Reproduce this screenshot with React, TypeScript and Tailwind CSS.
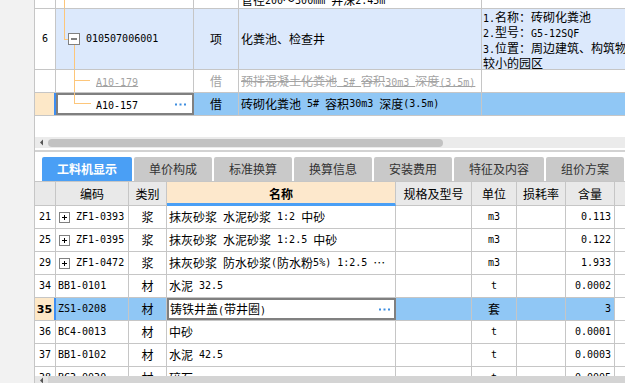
import React from 'react';

const ASCII = /^[\x20-\x7e]+$/;
function T({ s }: { s: string }) {
  const parts = s.split(/([\x20-\x7e]+)/).filter((p) => p.length > 0);
  return (
    <>
      {parts.map((p, i) =>
        ASCII.test(p) ? (
          <span key={i} className="font-['DejaVu_Sans_Mono',monospace] text-[10px] whitespace-pre">
            {p}
          </span>
        ) : (
          <span key={i}>{p}</span>
        )
      )}
    </>
  );
}

function Dots() {
  return (
    <svg width="11" height="3" viewBox="0 0 11 3" className="shrink-0">
      <rect x="0" y="0.5" width="2" height="2" fill="#3d8de0" />
      <rect x="4.5" y="0.5" width="2" height="2" fill="#3d8de0" />
      <rect x="9" y="0.5" width="2" height="2" fill="#3d8de0" />
    </svg>
  );
}

function PlusBox() {
  return (
    <svg width="11" height="11" viewBox="0 0 11 11" className="shrink-0">
      <rect x="0.5" y="0.5" width="10" height="10" fill="#fff" stroke="#808080" />
      <line x1="3" y1="5.5" x2="8" y2="5.5" stroke="#000" />
      <line x1="5.5" y1="3" x2="5.5" y2="8" stroke="#000" />
    </svg>
  );
}

const line = '#fdc67a';

const bottomRows = [
  { n: '21', box: true, code: 'ZF1-0393', t: '浆', name: '抹灰砂浆 水泥砂浆 1:2 中砂', unit: 'm3', q: '0.113' },
  { n: '25', box: true, code: 'ZF1-0395', t: '浆', name: '抹灰砂浆 水泥砂浆 1:2.5 中砂', unit: 'm3', q: '0.122' },
  { n: '29', box: true, code: 'ZF1-0472', t: '浆', name: '抹灰砂浆 防水砂浆(防水粉5%) 1:2.5 …', unit: 'm3', q: '1.933' },
  { n: '34', box: false, code: 'BB1-0101', t: '材', name: '水泥 32.5', unit: 't', q: '0.0002' },
  { n: '35', box: false, code: 'ZS1-0208', t: '材', name: '铸铁井盖(带井圈)', unit: '套', q: '3', sel: true },
  { n: '36', box: false, code: 'BC4-0013', t: '材', name: '中砂', unit: 't', q: '0.0001' },
  { n: '37', box: false, code: 'BB1-0102', t: '材', name: '水泥 42.5', unit: 't', q: '0.0003' },
  { n: '38', box: false, code: 'BC3-0030', t: '材', name: '碎石', unit: 't', q: '0.0005' },
];

const tabs = ['工料机显示', '单价构成', '标准换算', '换算信息', '安装费用', '特征及内容', '组价方案'];
const tabW = ['w-[90px]', 'w-[78px]', 'w-[78px]', 'w-[78px]', 'w-[78px]', 'w-[90px]', 'w-[78px]'];

export default function App() {
  return (
    <div className="flex w-[625px] h-[383px] overflow-hidden bg-white font-['Noto_Sans_CJK_SC',sans-serif] text-[12px] leading-none text-black">
      <div className="w-[34px] shrink-0 bg-[#f2f2f2]" />
      <div className="flex min-w-0 flex-1 flex-col border-l border-[#c6c6c6]">
        {/* Top grid */}
        <div className="flex h-[116px] shrink-0 flex-col overflow-hidden">
          {/* partial row */}
          <div className="-mt-[14px] flex h-[23px] shrink-0 border-b border-[#c6c6c6]">
            <div className="w-[21px] shrink-0 border-r border-[#c6c6c6]" />
            <div className="flex w-[138px] shrink-0 border-r border-[#c6c6c6]">
              <svg width="30" height="22" className="shrink-0">
                <line x1="8.5" y1="0" x2="8.5" y2="22" stroke={line} />
              </svg>
            </div>
            <div className="w-[45px] shrink-0 border-r border-[#c6c6c6]" />
            <div className="flex w-[243px] shrink-0 items-end overflow-hidden whitespace-nowrap border-r border-[#c6c6c6] pb-[2px] pl-[2px]">
              <T s="管径200～300mm 井深2.45m" />
            </div>
            <div className="flex-1" />
          </div>
          {/* row 6 */}
          <div className="flex h-[61px] shrink-0 border-b border-[#c6c6c6]">
            <div className="flex w-[21px] shrink-0 items-center justify-center border-r border-[#c6c6c6]">
              <T s="6" />
            </div>
            <div className="flex w-[138px] shrink-0 items-center border-r border-[#c6c6c6] bg-[#dce9fc]">
              <svg width="30" height="60" className="shrink-0 self-stretch">
                <line x1="8.5" y1="0" x2="8.5" y2="30.5" stroke={line} />
                <line x1="8" y1="30.5" x2="12" y2="30.5" stroke={line} />
                <line x1="18.5" y1="35" x2="18.5" y2="60" stroke={line} />
                <rect x="12.5" y="24.5" width="11" height="11" fill="#fff" stroke="#808080" />
                <line x1="15" y1="30" x2="21" y2="30" stroke="#000" />
              </svg>
              <T s="010507006001" />
            </div>
            <div className="flex w-[45px] shrink-0 items-center justify-center border-r border-[#c6c6c6] bg-[#dce9fc]">项</div>
            <div className="flex w-[243px] shrink-0 items-center whitespace-nowrap border-r border-[#c6c6c6] bg-[#dce9fc] pl-[2px]">
              化粪池、检查井
            </div>
            <div className="min-w-0 flex-1 overflow-hidden whitespace-nowrap bg-[#dce9fc] pl-[1px] pt-[1px] leading-[13.4px]">
              <div><T s="1.名称：砖砌化粪池" /></div>
              <div><T s="2.型号：G5-12SQF" /></div>
              <div><T s="3.位置：周边建筑、构筑物" /></div>
              <div><T s="较小的园区" /></div>
            </div>
          </div>
          {/* A10-179 */}
          <div className="flex h-[23px] shrink-0 border-b border-[#c6c6c6] text-[#a3a3a3]">
            <div className="w-[21px] shrink-0 border-r border-[#c6c6c6]" />
            <div className="flex w-[138px] shrink-0 items-center border-r border-[#c6c6c6]">
              <svg width="40" height="22" className="shrink-0">
                <line x1="18.5" y1="0" x2="18.5" y2="22" stroke={line} />
                <line x1="18" y1="10.5" x2="34" y2="10.5" stroke={line} />
              </svg>
              <span className="line-through"><T s="A10-179" /></span>
            </div>
            <div className="flex w-[45px] shrink-0 items-center justify-center border-r border-[#c6c6c6]">借</div>
            <div className="flex w-[243px] shrink-0 items-center overflow-hidden whitespace-nowrap border-r border-[#c6c6c6] pl-[2px]">
              <span className="line-through"><T s="预拌混凝土化粪池 5# 容积30m3 深度(3.5m)" /></span>
            </div>
            <div className="flex-1" />
          </div>
          {/* A10-157 */}
          <div className="flex h-[23px] shrink-0 border-b border-[#c6c6c6]">
            <div className="w-[21px] shrink-0 border-r-2 border-[#3d8ef2] bg-[#fde8c8]" />
            <div className="flex w-[138px] shrink-0 items-center bg-white pr-[8px] shadow-[inset_0_0_0_2px_#808080]">
              <svg width="40" height="22" className="shrink-0">
                <line x1="18.5" y1="0" x2="18.5" y2="10.5" stroke={line} />
                <line x1="18" y1="10.5" x2="35" y2="10.5" stroke={line} />
              </svg>
              <span className="flex-1"><T s="A10-157" /></span>
              <Dots />
            </div>
            <div className="flex w-[45px] shrink-0 items-center justify-center border-r border-[#c6c6c6] bg-[#90c7f5]">借</div>
            <div className="flex w-[243px] shrink-0 items-center overflow-hidden whitespace-nowrap border-r border-[#c6c6c6] bg-[#90c7f5] pl-[2px]">
              <T s="砖砌化粪池 5# 容积30m3 深度(3.5m)" />
            </div>
            <div className="flex-1 bg-[#90c7f5]" />
          </div>
        </div>
        <div className="h-[21px] shrink-0" />
        {/* horizontal scrollbar */}
        <div className="flex h-[11px] shrink-0 items-center bg-[#ebebeb]">
          <svg width="13" height="11" className="shrink-0">
            <path d="M8 2.5 L5 5.5 L8 8.5 Z" fill="#555" />
          </svg>
          <div className="h-[8px] w-[395px] rounded-full bg-[#c2c2c2]" />
        </div>
        <div className="h-[2px] shrink-0" />
        <div className="h-[2px] shrink-0 bg-[#d2d2d2]" />
        {/* tabs */}
        <div className="mt-[5px] flex h-[24px] shrink-0 gap-[2px] pl-[7px]">
          {tabs.map((t, i) => (
            <div
              key={t}
              className={
                i === 0
                  ? `${tabW[i]} flex shrink-0 items-center justify-center rounded-t-[2px] bg-[#4a9ff5] font-bold text-white`
                  : `${tabW[i]} flex shrink-0 items-center justify-center rounded-t-[2px] bg-[#c9c9c9] text-[#333]`
              }
            >
              {t}
            </div>
          ))}
        </div>
        {/* bottom grid */}
        <div className="flex min-h-0 flex-1 flex-col overflow-hidden">
          <div className="flex h-[25px] shrink-0 border-t border-[#c6c6c6] bg-[#e9e9e9]">
            <div className="w-[21px] shrink-0 border-b border-r border-[#c6c6c6]" />
            <div className="flex w-[73px] shrink-0 items-center justify-center border-b border-r border-[#c6c6c6]">编码</div>
            <div className="flex w-[38px] shrink-0 items-center justify-center border-b border-r border-[#c6c6c6]">类别</div>
            <div className="flex w-[229px] shrink-0 items-center justify-center border-b-[3px] border-r border-b-[#4a9ff5] border-r-[#c6c6c6] bg-[#fde8cc] pt-[2px] font-bold">名称</div>
            <div className="flex w-[76px] shrink-0 items-center justify-center border-b border-r border-[#c6c6c6]">规格及型号</div>
            <div className="flex w-[45px] shrink-0 items-center justify-center border-b border-r border-[#c6c6c6]">单位</div>
            <div className="flex w-[49px] shrink-0 items-center justify-center border-b border-r border-[#c6c6c6]">损耗率</div>
            <div className="flex w-[49px] shrink-0 items-center justify-center border-b border-r border-[#c6c6c6]">含量</div>
            <div className="flex-1 border-b border-[#c6c6c6]" />
          </div>
          {bottomRows.map((r) => {
            const sel = !!r.sel;
            const bg = sel ? 'bg-[#90c7f5]' : 'bg-white';
            return (
              <div key={r.n} className="flex h-[23px] shrink-0 border-b border-[#c6c6c6]">
                <div
                  className={
                    sel
                      ? 'flex w-[21px] shrink-0 items-center justify-center border-r-2 border-[#3d8ef2] bg-[#fde8c8] font-bold'
                      : 'flex w-[21px] shrink-0 items-center justify-center border-r border-[#c6c6c6]'
                  }
                >
                  {sel ? <span className="font-['DejaVu_Sans',sans-serif] text-[11px] font-bold">{r.n}</span> : <T s={r.n} />}
                </div>
                <div className={`flex w-[73px] shrink-0 items-center overflow-hidden whitespace-nowrap border-r border-[#c6c6c6] pl-[2px] ${bg}`}>
                  {r.box ? (
                    <>
                      <span className="ml-[1px] mr-[6px] flex"><PlusBox /></span>
                      <T s={r.code} />
                    </>
                  ) : (
                    <T s={r.code} />
                  )}
                </div>
                <div className={`flex w-[38px] shrink-0 items-center justify-center border-r border-[#c6c6c6] ${bg}`}>{r.t}</div>
                {sel ? (
                  <div className="flex w-[229px] shrink-0 items-center whitespace-nowrap bg-white pl-[3px] pr-[6px] shadow-[inset_0_0_0_2px_#808080]">
                    <span className="flex-1"><T s={r.name} /></span>
                    <Dots />
                  </div>
                ) : (
                  <div className="flex w-[229px] shrink-0 items-center overflow-hidden whitespace-nowrap border-r border-[#c6c6c6] pl-[2px]">
                    <T s={r.name} />
                  </div>
                )}
                <div className={`w-[76px] shrink-0 border-r border-[#c6c6c6] ${bg}`} />
                <div className={`flex w-[45px] shrink-0 items-center justify-center border-r border-[#c6c6c6] ${bg}`}>
                  <T s={r.unit} />
                </div>
                <div className={`w-[49px] shrink-0 border-r border-[#c6c6c6] ${bg}`} />
                <div className={`flex w-[49px] shrink-0 items-center justify-end border-r border-[#c6c6c6] pr-[3px] ${bg}`}>
                  <T s={r.q} />
                </div>
                <div className="flex-1" />
              </div>
            );
          })}
        </div>
        {/* bottom scrollbar */}
        <div className="flex h-[7px] shrink-0 items-start bg-[#e6e6e6]">
          <svg width="13" height="7" className="shrink-0">
            <path d="M8 1.5 L5 4.5 L8 7.5 Z" fill="#555" />
          </svg>
          <div className="h-[7px] flex-1 bg-[#d4d4d4]" />
        </div>
      </div>
    </div>
  );
}
